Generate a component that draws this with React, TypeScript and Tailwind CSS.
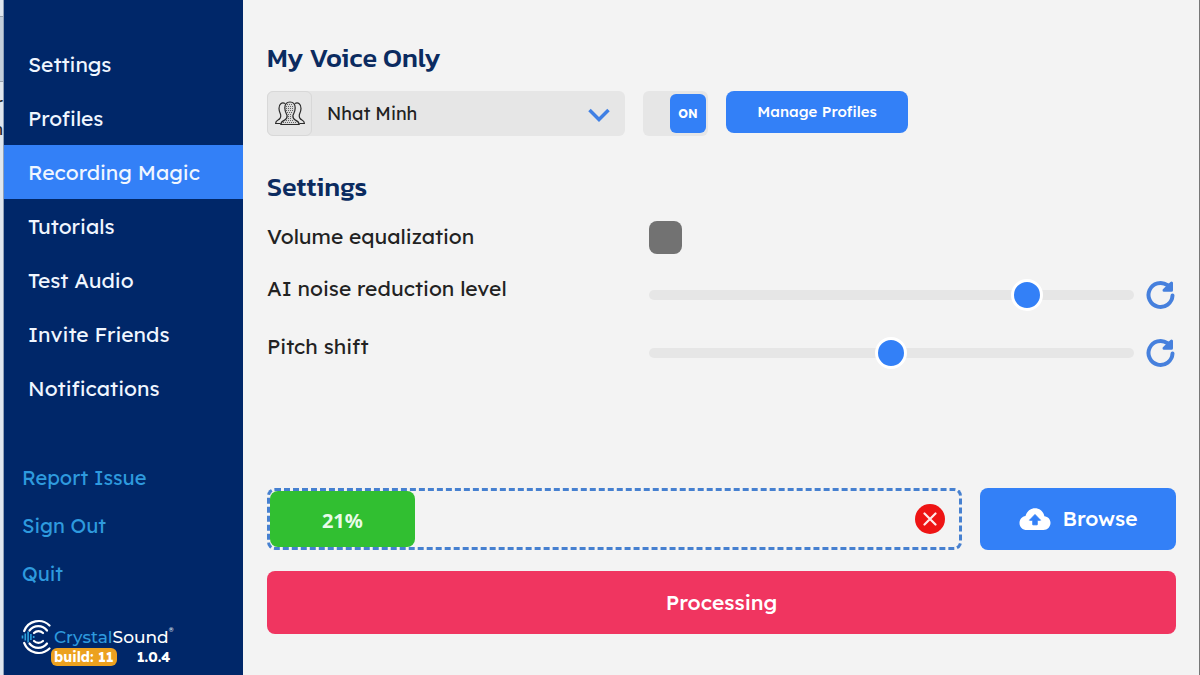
import { useState } from 'react';

const menuItems = [
  'Settings',
  'Profiles',
  'Recording Magic',
  'Tutorials',
  'Test Audio',
  'Invite Friends',
  'Notifications',
];

const accountLinks = ['Report Issue', 'Sign Out', 'Quit'];

function CrystalLogo() {
  return (
    <svg width="34" height="36" viewBox="0 0 34 36" fill="none" aria-hidden="true">
      <g stroke="#fff" strokeWidth="2.2" strokeLinecap="round">
        <path d="M3.200 12A15.500 15.500 0 0 1 28.500 6.500" />
        <path d="M3.200 24A15.500 15.500 0 0 0 28.500 29.500" />
        <path d="M8.500 11.500A11 11 0 0 1 26 11.500" />
        <path d="M8.500 24.500A11 11 0 0 0 26 24.500" />
        <path d="M13 14A6.500 6.500 0 0 1 22 14" />
        <path d="M13 22A6.500 6.500 0 0 0 22 22" />
      </g>
      <path
        d="M1.500 16.500v3M4.300 14.500v7M7.100 12.500v11M9.900 15v6M12.700 17v2"
        stroke="#2ea3e0"
        strokeWidth="1.600"
      />
    </svg>
  );
}

function PeopleIcon() {
  return (
    <svg width="30" height="26" viewBox="0 0 30 26" fill="none" stroke="#2b2b2b" strokeWidth="1.200" aria-hidden="true">
      <path d="M10 2.500C7 1 3.800 3 4 7.500c.1 3 1.200 4.500 1.700 6.500.3 2.500-.6 4-2.700 5C1.300 19.800.6 20.500.6 22.500h5" />
      <path d="M20 2.500c3-1.500 6.200.5 6 5-.1 3-1.200 4.500-1.700 6.500-.3 2.500.6 4 2.700 5 1.700.8 2.400 1.500 2.400 3.500h-5" />
      <path
        d="M15 1c-3.600 0-5.300 2.400-5.200 6 .1 4 1.300 5.500 2.300 7.500.2 2.500-.4 3.500-2.600 4.600-2.500 1.100-3.600 2-3.700 4.400h18.400c-.1-2.400-1.200-3.300-3.700-4.400-2.200-1.100-2.800-2.100-2.600-4.600 1-2 2.200-3.500 2.300-7.500C20.300 3.400 18.600 1 15 1z"
        fill="#d9d9d9"
      />
      <path
        d="M12 3.500h6M11 5.500h8M11 7.500h8M11 9.500h8M12 11.500h6M13 13.500h4M13 15.500h4M13 17.500h4M11 19.500h8M8 21.500h14"
        stroke="#666"
        strokeWidth="1"
        strokeDasharray="1 1"
      />
    </svg>
  );
}

function ResetIcon() {
  return (
    <svg width="30" height="30" viewBox="0 0 30 30" fill="none" aria-hidden="true">
      <path d="M26.500 15.500A12 12 0 1 1 21.500 5.200" stroke="#4680dd" strokeWidth="4" strokeLinecap="round" />
      <path
        d="M25.500 3v7.200h-7.500l4-4z"
        fill="#4680dd"
        stroke="#4680dd"
        strokeWidth="3"
        strokeLinejoin="round"
      />
    </svg>
  );
}

function CloudIcon() {
  return (
    <svg width="32" height="22" viewBox="0 0 32 22" aria-hidden="true">
      <path
        d="M8 22C3.500 22 .5 19 .5 14.900c0-3.700 2.600-6.500 6-7C8 3.400 11.500.3 16 .3c4.800 0 8.600 3.300 9.400 7.900 3.500.3 6.100 3.100 6.100 6.600 0 4.100-3 7.200-7 7.200z"
        fill="#fff"
      />
      <path
        d="M16 6.500l5.500 5.700h-3.300v4.600h-4.400v-4.600h-3.300z"
        fill="#3380f7"
        stroke="#3380f7"
        strokeWidth="1"
        strokeLinejoin="round"
      />
    </svg>
  );
}

interface LevelSliderProps {
  id: string;
  label: string;
  initial: number;
}

function LevelSlider({ id, label, initial }: LevelSliderProps) {
  const [value, setValue] = useState(initial);

  return (
    <div className="flex h-[58px] items-center">
      <label htmlFor={id} className="w-[42%] shrink-0 pb-3 text-[21px]">
        {label}
      </label>
      <input
        id={id}
        type="range"
        value={value}
        onChange={(e) => setValue(Number(e.target.value))}
        className="h-2.5 min-w-0 flex-1 appearance-none rounded-full bg-[#e6e6e6] [&::-webkit-slider-thumb]:h-8 [&::-webkit-slider-thumb]:w-8 [&::-webkit-slider-thumb]:appearance-none [&::-webkit-slider-thumb]:rounded-full [&::-webkit-slider-thumb]:border-3 [&::-webkit-slider-thumb]:border-white [&::-webkit-slider-thumb]:bg-[#3380f7]"
      />
      <button
        type="button"
        aria-label={`Reset ${label}`}
        onClick={() => setValue(initial)}
        className="ml-3 shrink-0"
      >
        <ResetIcon />
      </button>
    </div>
  );
}

function Sidebar() {
  const [active, setActive] = useState('Recording Magic');

  return (
    <aside className="flex w-[239px] shrink-0 flex-col bg-[#002769] pt-[37px]">
      <nav className="flex flex-col">
        {menuItems.map((item) => (
          <button
            key={item}
            type="button"
            onClick={() => setActive(item)}
            className={`h-[54px] px-6 pt-px text-left text-[21px] text-[#f0f6ff] ${
              item === active ? 'bg-[#3380f7]' : ''
            }`}
          >
            {item}
          </button>
        ))}
      </nav>

      <div className="mt-[39px] flex flex-col px-[18px]">
        {accountLinks.map((item) => (
          <a key={item} href="#" className="flex h-12 items-center text-xl text-[#2e9ade]">
            {item}
          </a>
        ))}
      </div>

      <div className="mt-auto flex px-[17px] pb-[9px]">
        <CrystalLogo />
        <div className="-ml-1 pt-[7px]">
          <div className="flex pl-[3px] font-['Montserrat','Lexend','Inter',sans-serif] text-[17px] leading-[22px] font-medium text-white">
            <span className="text-[#2e9ade]">Crystal</span>
            <span>Sound</span>
            <span className="text-[6px] leading-2">®</span>
          </div>
          <div className="flex items-center gap-5 text-[14px] leading-[18px] font-bold text-white">
            <span className="rounded-md bg-[#eca11f] px-[3px]">build: 11</span>
            <span>1.0.4</span>
          </div>
        </div>
      </div>
    </aside>
  );
}

export default function App() {
  const [enabled, setEnabled] = useState(true);
  const progress = 21;

  return (
    <div className="flex min-h-screen bg-[#f3f3f3] font-['Lexend','Inter',sans-serif] text-[#222]">
      {/* Sliver of the window behind */}
      <div className="flex w-1 shrink-0 flex-col items-end overflow-hidden border-r border-[#8fa0b8] bg-[#dfe6ee] pt-4 text-base" aria-hidden="true">
        <div className="h-[66px] w-1 border-y border-[#9aa3b0] bg-[#c3cedb]" />
        <span className="mt-2 leading-[26px]">r</span>
        <span className="leading-[26px]">n</span>
      </div>

      <Sidebar />

      <main className="flex min-w-0 flex-1 flex-col border-r border-[#777] pt-11 pr-[23px] pb-[41px] pl-6">
        <h2 className="font-['Kanit','Lexend','Inter',sans-serif] text-[27px] leading-7 font-medium text-[#0b2b60]">
          My Voice Only
        </h2>

        <div className="mt-[19px] flex items-start gap-[18px]">
          <div className="relative h-[45px] w-[358px] rounded-md bg-[#e6e6e6]">
            <span className="pointer-events-none absolute inset-y-0 left-0 flex w-[45px] items-center justify-center rounded-md border border-[#d8d8d8]">
              <PeopleIcon />
            </span>
            <select
              aria-label="Voice profile"
              className="h-full w-full appearance-none rounded-md bg-transparent pr-12 pl-[60px] text-lg"
            >
              <option>Nhat Minh</option>
            </select>
            <svg
              className="pointer-events-none absolute top-4 right-3.5"
              width="24"
              height="16"
              viewBox="0 0 24 16"
              fill="none"
              aria-hidden="true"
            >
              <path d="M2.500 3L12 12.500 21.500 3" stroke="#4080e4" strokeWidth="3.500" />
            </svg>
          </div>

          <button
            type="button"
            role="switch"
            aria-checked={enabled}
            aria-label="My Voice Only"
            onClick={() => setEnabled(!enabled)}
            className={`flex h-[45px] w-[65px] items-center rounded-md bg-[#e6e6e6] px-0.5 ${
              enabled ? 'justify-end' : 'justify-start'
            }`}
          >
            <span className="flex h-[39px] w-9 items-center justify-center rounded-md bg-[#3380f7] text-xs font-bold text-white">
              {enabled ? 'ON' : 'OFF'}
            </span>
          </button>

          <button
            type="button"
            className="h-[42px] w-[182px] rounded-lg bg-[#3380f7] text-[15px] font-medium text-white"
          >
            Manage Profiles
          </button>
        </div>

        <h2 className="mt-[37px] font-['Kanit','Lexend','Inter',sans-serif] text-[27px] leading-7 font-medium text-[#0b2b60]">
          Settings
        </h2>

        <div className="mt-[7px] flex h-[58px] items-center">
          <label htmlFor="equalization" className="w-[42%] shrink-0 text-[21px]">
            Volume equalization
          </label>
          <input
            id="equalization"
            type="checkbox"
            className="h-[33px] w-[33px] appearance-none rounded-lg bg-[#727272] checked:bg-[#3380f7]"
          />
        </div>
        <LevelSlider id="noise" label="AI noise reduction level" initial={80} />
        <LevelSlider id="pitch" label="Pitch shift" initial={50} />

        <div className="mt-auto flex gap-[18px]">
          <div className="flex h-[62px] flex-1 items-center justify-between rounded-lg border-3 border-dashed border-[#4680d0]">
            <div
              className="flex h-full items-center justify-center rounded-lg bg-[#31bf31] pt-1 font-['Noto_Sans','Open_Sans',sans-serif] text-xl font-bold text-[#e9fbe9]"
              style={{ width: `${progress}%` }}
            >
              {progress}%
            </div>
            <button type="button" aria-label="Cancel upload" className="mr-3.5 flex h-[30px] w-[30px] items-center justify-center rounded-full bg-[#ee1414]">
              <svg width="14" height="14" viewBox="0 0 14 14" aria-hidden="true">
                <path d="M1.500 1.500l11 11M12.500 1.500l-11 11" stroke="#ffe9e9" strokeWidth="2.200" strokeLinecap="round" />
              </svg>
            </button>
          </div>
          <button
            type="button"
            className="flex h-[62px] w-[196px] items-center justify-center gap-3 rounded-lg bg-[#3380f7] text-[21px] font-medium text-white"
          >
            <CloudIcon />
            Browse
          </button>
        </div>

        <button
          type="button"
          className="mt-[21px] h-[63px] rounded-lg bg-[#f03560] text-[21px] font-medium text-white"
        >
          Processing
        </button>
      </main>
    </div>
  );
}
